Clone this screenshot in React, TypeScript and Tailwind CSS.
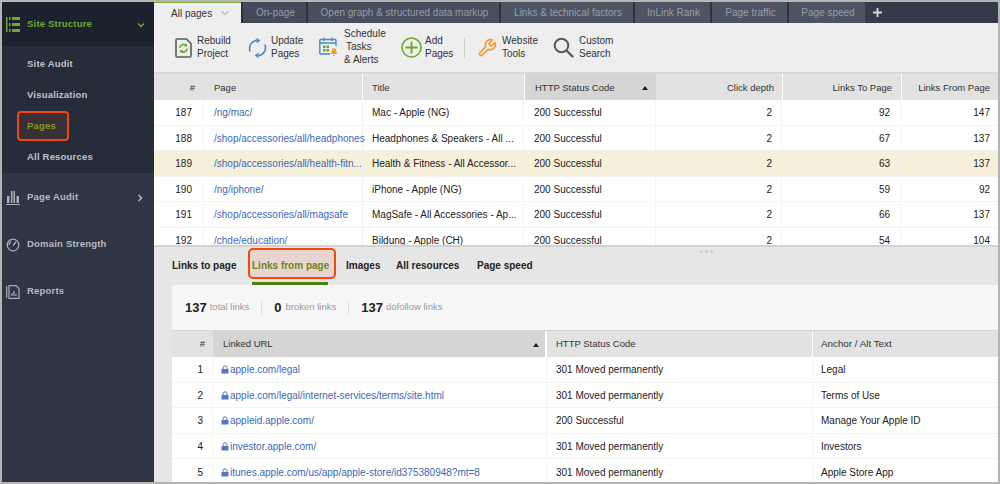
import React from "react";

const topCols = "grid grid-cols-[50px_159px_161px_132px_126px_119px_97px]";
const botCols = "grid grid-cols-[41px_334px_266px_185px]";

const top = [
  ["187", "/ng/mac/", "Mac - Apple (NG)", "200 Successful", "2", "92", "147"],
  ["188", "/shop/accessories/all/headphones", "Headphones & Speakers - All ...", "200 Successful", "2", "67", "137"],
  ["189", "/shop/accessories/all/health-fitn...", "Health & Fitness - All Accessor...", "200 Successful", "2", "63", "137"],
  ["190", "/ng/iphone/", "iPhone - Apple (NG)", "200 Successful", "2", "59", "92"],
  ["191", "/shop/accessories/all/magsafe", "MagSafe - All Accessories - Ap...", "200 Successful", "2", "66", "137"],
  ["192", "/chde/education/", "Bildung - Apple (CH)", "200 Successful", "2", "54", "104"],
];
const bottom = [
  ["1", "apple.com/legal", "301 Moved permanently", "Legal"],
  ["2", "apple.com/legal/internet-services/terms/site.html", "301 Moved permanently", "Terms of Use"],
  ["3", "appleid.apple.com/", "200 Successful", "Manage Your Apple ID"],
  ["4", "investor.apple.com/", "301 Moved permanently", "Investors"],
  ["5", "itunes.apple.com/us/app/apple-store/id375380948?mt=8", "301 Moved permanently", "Apple Store App"],
];

const Lock = () => (
  <svg width="8" height="9" viewBox="0 0 8 9" className="shrink-0 mr-[1px]">
    <path d="M2 4V2.8a2 2 0 0 1 4 0V4" fill="none" stroke="#5078c4" strokeWidth="1" />
    <rect x="0.5" y="4" width="7" height="4.6" rx="0.5" fill="#5078c4" />
  </svg>
);

const tools: { label: string[]; icon: React.ReactNode; w: string; gap: string }[] = [
  {
    label: ["Rebuild", "Project"], w: "w-[73px]", gap: "gap-[5px]",
    icon: (
      <svg width="17" height="20" viewBox="0 0 17 20" fill="none">
        <path d="M1 2a1 1 0 0 1 1-1h9.500L16 5.500V18a1 1 0 0 1-1 1H2a1 1 0 0 1-1-1z" stroke="#5c5c5c" strokeWidth="1.600" />
        <path d="M4.800 10a3.700 3.700 0 0 1 6.200-2.600M12.200 10.500A3.700 3.700 0 0 1 6 13.100" stroke="#66a82a" strokeWidth="1.500" />
        <path d="M12 5.500v3h-3zM5 15v-3h3z" fill="#66a82a" />
      </svg>
    ),
  },
  {
    label: ["Update", "Pages"], w: "w-[71px]", gap: "gap-[4px]",
    icon: (
      <svg width="19" height="20" viewBox="0 0 19 20" fill="none">
        <path d="M2.200 13.500A8 8 0 0 1 8.500 2.400M16.800 6.500A8 8 0 0 1 10.500 17.600" stroke="#4f86c6" strokeWidth="1.600" />
        <path d="M8.500 0l4 2.600-4 2.600zM10.500 20l-4-2.600 4-2.600z" fill="#4f86c6" />
      </svg>
    ),
  },
  {
    label: ["Schedule", "Tasks", "& Alerts"], w: "w-[82px]", gap: "gap-[4px]",
    icon: (
      <svg width="21" height="20" viewBox="0 0 21 20" fill="none">
        <path d="M11 17H1.800a1 1 0 0 1-1-1V3.500a1 1 0 0 1 1-1H16a1 1 0 0 1 1 1V9" stroke="#4f86c6" strokeWidth="1.400" />
        <path d="M.8 6h16M5 .5v3.500M13 .5v3.500" stroke="#4f86c6" strokeWidth="1.400" />
        <path d="M4 8.500h2.500V11H4zM7.500 8.500H10V11H7.500zM4 12h2.500v2.500H4zM7.500 12H10v2.500H7.500z" fill="#66a82a" />
        <path d="M11.500 17c1-.8 1-1.800 1.100-3 .1-1.700 1.100-2.800 2.400-2.800s2.300 1.100 2.400 2.800c.1 1.200.1 2.200 1.100 3zM13.800 18h2.400l-1.200 1.800z" fill="#f39a2d" />
      </svg>
    ),
  },
  {
    label: ["Add", "Pages"], w: "w-[63px]", gap: "gap-[3px]",
    icon: (
      <svg width="21" height="21" viewBox="0 0 21 21" fill="none">
        <circle cx="10.500" cy="10.500" r="9.500" stroke="#66a82a" strokeWidth="1.600" />
        <path d="M10.500 4.500v12M4.500 10.500h12" stroke="#66a82a" strokeWidth="1.800" />
      </svg>
    ),
  },
  {
    label: ["Website", "Tools"], w: "w-[76px]", gap: "gap-[5px]",
    icon: (
      <svg width="20" height="20" viewBox="0 0 24 24" fill="none">
        <path d="M14.700 6.300a1 1 0 0 0 0 1.400l1.600 1.600a1 1 0 0 0 1.400 0l3.770-3.770a6 6 0 0 1-7.940 7.940l-6.910 6.910a2.120 2.120 0 0 1-3-3l6.910-6.910a6 6 0 0 1 7.940-7.940z" stroke="#f39a2d" strokeWidth="2" strokeLinejoin="round" />
      </svg>
    ),
  },
  {
    label: ["Custom", "Search"], w: "w-[70px]", gap: "gap-[5px]",
    icon: (
      <svg width="21" height="21" viewBox="0 0 21 21" fill="none">
        <circle cx="8.500" cy="8.500" r="6.800" stroke="#595959" strokeWidth="2" />
        <path d="M13.500 13.500l6 6" stroke="#595959" strokeWidth="2.400" strokeLinecap="round" />
      </svg>
    ),
  },
];

const tabs = [
  ["On-page", "w-[65px]", "bg-[#434a5a]"],
  ["Open graph & structured data markup", "w-[193px]", "bg-[#474e5e]"],
  ["Links & technical factors", "w-[134px]", "bg-[#4d5564]"],
  ["InLink Rank", "w-[77px]", "bg-[#4d5564]"],
  ["Page traffic", "w-[77px]", "bg-[#4d5564]"],
  ["Page speed", "w-[78px]", "bg-[#4d5564]"],
];

export default function App() {
  return (
    <div className="w-[1000px] h-[484px] overflow-hidden bg-[#b4b4b4] p-[2px] font-['Liberation_Sans',Arial,sans-serif] text-[10px] text-[#222]">
      <div className="flex h-full bg-white">
        {/* Sidebar */}
        <aside className="w-[152px] shrink-0 bg-[#2f3646] flex flex-col font-bold tracking-[0.2px] text-[9.5px]">
          <div className="h-[44px] bg-[#1b212d] flex items-center pt-[1px] pl-[4px] pr-[9px] text-[#6fa82c]">
            <svg width="14" height="15" viewBox="0 0 14 15" className="mr-[5px]" fill="#6fa82c">
              <path d="M0 0h1.500v15H0zM3 0h1.500v3H3zM3 6h1.500v3H3zM3 12h1.500v3H3zM6 0h8v3H6zM6 6h8v3H6zM6 12h8v3H6z" />
            </svg>
            <span className="flex-1 pl-[2px]">Site Structure</span>
            <svg width="8" height="6" viewBox="0 0 8 6" fill="none"><path d="M1 1.500l3 3 3-3" stroke="#6fa82c" strokeWidth="1.500" /></svg>
          </div>
          <div className="h-[127px] bg-[#262d3a] flex flex-col pt-[3px] text-[#bcc3cd] pl-[25px]">
            <div className="h-[31px] flex items-center">Site Audit</div>
            <div className="h-[31px] flex items-center">Visualization</div>
            <div className="h-[31px] flex items-center relative text-[#6fa82c]">
              Pages
              <span className="absolute left-[-10px] top-0 w-[52px] h-[30px] rounded-[4px] border-2 border-[#f2480f] bg-[#f2480f]/10" />
            </div>
            <div className="h-[31px] flex items-center">All Resources</div>
          </div>
          <div className="h-[47px] flex items-center pt-[3px] pl-[4px] pr-[11px] text-[#b5bac3] border-b border-dotted border-[#262c38]">
            <svg width="14" height="14" viewBox="0 0 14 14" className="mr-[5px]" fill="#aab0ba">
              <path d="M1 5h2.500v7H1zM5 0h1.500v12H5zM7.500 0H9v12H7.500zM10.500 5H13v7h-2.500zM0 13h14v1H0z" />
            </svg>
            <span className="flex-1 pl-[2px]">Page Audit</span>
            <svg width="6" height="8" viewBox="0 0 6 8" fill="none"><path d="M1.500 1l3 3-3 3" stroke="#b5bac3" strokeWidth="1.500" /></svg>
          </div>
          <div className="h-[47px] flex items-center pt-[3px] pl-[4px] text-[#b5bac3] border-b border-dotted border-[#262c38]">
            <svg width="14" height="14" viewBox="0 0 14 14" className="mr-[5px]" fill="none" stroke="#aab0ba" strokeWidth="1.300">
              <circle cx="7" cy="7" r="5.800" />
              <path d="M7 7.500l3-3.500M3 7a4 4 0 0 1 2-3.400" />
            </svg>
            <span className="pl-[2px]">Domain Strength</span>
          </div>
          <div className="h-[48px] flex items-center pt-[1px] pl-[4px] text-[#b5bac3]">
            <svg width="14" height="14" viewBox="0 0 14 14" className="mr-[5px]" fill="none" stroke="#aab0ba" strokeWidth="1.200">
              <path d="M.700 1v12M3 .700h7l3 3v9.600H3z" />
              <path d="M6 11V8M8 11V6M10 11V9" />
            </svg>
            <span className="pl-[2px]">Reports</span>
          </div>
        </aside>

        {/* Main */}
        <main className="flex-1 min-w-0 flex flex-col">
          <div className="h-[21px] shrink-0 bg-[#333a4a] flex items-stretch text-[#959da8]">
            <div className="w-[87px] bg-[#eeeeee] border-t border-[#7cb13a] text-[#333] flex items-center pl-[17px] gap-[9px]">
              All pages
              <svg width="8" height="5" viewBox="0 0 8 5" fill="none"><path d="M.500 .500L4 3.500l3.500-3" stroke="#b5b5b5" strokeWidth="1.300" /></svg>
            </div>
            {tabs.map(([t, w, bg]) => (
              <div key={t} className={`${w} ${bg} border-l-2 border-[#2b3240] flex items-center justify-center pl-[2px] whitespace-nowrap`}>
                {t}
              </div>
            ))}
            <div className="ml-[8px] flex items-center">
              <svg width="9" height="9" viewBox="0 0 9 9"><path d="M4.500 0v9M0 4.500h9" stroke="#d5d8dc" strokeWidth="1.800" /></svg>
            </div>
          </div>

          <div className="h-[51px] shrink-0 bg-[#eeeeee] border-b-2 border-[#d9d9d9] flex items-center pl-[21px] text-[#333] leading-[12.700px]">
            {tools.map((t, i) => (
              <React.Fragment key={t.label[0]}>
                {i === 4 && <div className="w-px h-[20px] bg-[#cfcfcf] mr-[12px]" />}
                <div className={`${t.w} ${t.gap} shrink-0 flex items-center`}>
                  <div className="shrink-0 flex items-center justify-center">{t.icon}</div>
                  <div className="flex flex-col">
                    {t.label.map((l) => (
                      <span key={l} className={`whitespace-nowrap ${l === "Tasks" ? "pl-[2px]" : ""}`}>{l}</span>
                    ))}
                  </div>
                </div>
              </React.Fragment>
            ))}
          </div>

          {/* Top table */}
          <div className="h-[173px] shrink-0 overflow-hidden bg-white border-b-2 border-[#d2d2d2]">
            <div className={`${topCols} h-[26px] bg-[#e2e2e2] text-[#333] text-[9.5px]`}>
              <div className="flex items-center justify-end pt-[2px] pr-[9px]">#</div>
              <div className="flex items-center pt-[2px] pl-[10px] border-r border-white">Page</div>
              <div className="flex items-center pt-[2px] pl-[9px]">Title</div>
              <div className="flex items-center justify-between pt-[2px] pl-[10px] pr-[8px] bg-[#d5d5d5] border-l border-white">
                HTTP Status Code
                <span className="border-l-[3px] border-r-[3px] border-b-[4px] border-l-transparent border-r-transparent border-b-[#222]" />
              </div>
              <div className="flex items-center justify-end pt-[2px] pr-[8px]">Click depth</div>
              <div className="flex items-center justify-end pt-[2px] pr-[9px] border-l border-white">Links To Page</div>
              <div className="flex items-center justify-end pt-[2px] pr-[8px] border-l border-white">Links From Page</div>
            </div>
            {top.map((r, i) => (
              <div key={r[0]} className={`${topCols} h-[25.500px] pt-[1px] border-b border-[#f3f3f3] ${i === 2 ? "bg-[#f6efd9]" : "bg-white"}`}>
                <div className="flex items-center justify-end pr-[11px] border-r border-[#f3f3f3]">{r[0]}</div>
                <div className="flex items-center pl-[10px] text-[#3c68b5] whitespace-nowrap border-r border-[#f0f0f0]">{r[1]}</div>
                <div className="flex items-center pl-[9px] whitespace-nowrap overflow-hidden border-r border-[#f3f3f3]">{r[2]}</div>
                <div className="flex items-center pl-[10px] whitespace-nowrap border-r border-[#f3f3f3]">{r[3]}</div>
                <div className="flex items-center justify-end pr-[9px] border-r border-[#f3f3f3]">{r[4]}</div>
                <div className="flex items-center justify-end pr-[10px] border-r border-[#f3f3f3]">{r[5]}</div>
                <div className="flex items-center justify-end pr-[8px]">{r[6]}</div>
              </div>
            ))}
          </div>

          {/* Bottom pane */}
          <div className="flex-1 min-h-0 bg-[#e6e6e6] pl-[18px] flex flex-col relative overflow-hidden">
            <div className="absolute left-[546px] top-[3px] flex gap-[2px]">
              <span className="w-[3px] h-[3px] rounded-full bg-[#cbcbcb]" />
              <span className="w-[3px] h-[3px] rounded-full bg-[#cbcbcb]" />
              <span className="w-[3px] h-[3px] rounded-full bg-[#cbcbcb]" />
            </div>
            <div className="h-[38px] shrink-0 flex font-bold text-[#222]">
              <div className="pt-[11px] w-[80px] whitespace-nowrap">Links to page</div>
              <div className="w-[76px] mr-[18px] relative pt-[11px] text-[#5f8c1d] whitespace-nowrap">
                Links from page
                <span className="absolute -left-[4px] top-[1px] w-[88px] h-[31px] rounded-[5px] border-2 border-[#f2480f] bg-[#f2480f]/10" />
                <span className="absolute left-0 bottom-0 w-[76px] h-[3px] bg-[#4c8210]" />
              </div>
              <div className="pt-[11px] w-[50px]">Images</div>
              <div className="pt-[11px] w-[81px] whitespace-nowrap">All resources</div>
              <div className="pt-[11px] whitespace-nowrap">Page speed</div>
            </div>
            <div className="h-[46px] shrink-0 bg-[#f7f7f7] flex items-center pl-[13px] text-[#999] text-[9.5px] border-b border-[#d5d5d5]">
              <b className="text-[13px] text-[#222] mr-[3px]">137</b>total links
              <span className="w-px h-[14px] bg-[#ddd] mx-[12px]" />
              <b className="text-[13px] text-[#222] mr-[4px]">0</b>broken links
              <span className="w-px h-[14px] bg-[#ddd] mx-[12px]" />
              <b className="text-[13px] text-[#222] mr-[3px]">137</b>dofollow links
            </div>
            <div className="bg-white flex-1">
              <div className={`${botCols} h-[26px] bg-[#e2e2e2] text-[#333] text-[9.5px]`}>
                <div className="flex items-center justify-end pt-[1px] pr-[8px]">#</div>
                <div className="flex items-center justify-between pt-[1px] pl-[10px] pr-[6px] bg-[#d5d5d5] border-r-2 border-white">
                  Linked URL
                  <span className="border-l-[3px] border-r-[3px] border-b-[4px] border-l-transparent border-r-transparent border-b-[#222]" />
                </div>
                <div className="flex items-center pt-[1px] pl-[9px] border-r border-white">HTTP Status Code</div>
                <div className="flex items-center pt-[1px] pl-[8px] text-[9.8px]">Anchor / Alt Text</div>
              </div>
              {bottom.map((r) => (
                <div key={r[0]} className={`${botCols} h-[25.600px] pt-[1px] border-b border-[#f3f3f3]`}>
                  <div className="flex items-center justify-end pr-[9px] border-r border-[#f3f3f3]">{r[0]}</div>
                  <div className="flex items-center pl-[8px] text-[#3c68b5] whitespace-nowrap border-r border-[#f3f3f3]"><Lock />{r[1]}</div>
                  <div className="flex items-center pl-[9px] border-r border-[#f3f3f3]">{r[2]}</div>
                  <div className="flex items-center pl-[8px]">{r[3]}</div>
                </div>
              ))}
            </div>
          </div>
        </main>
      </div>
    </div>
  );
}
